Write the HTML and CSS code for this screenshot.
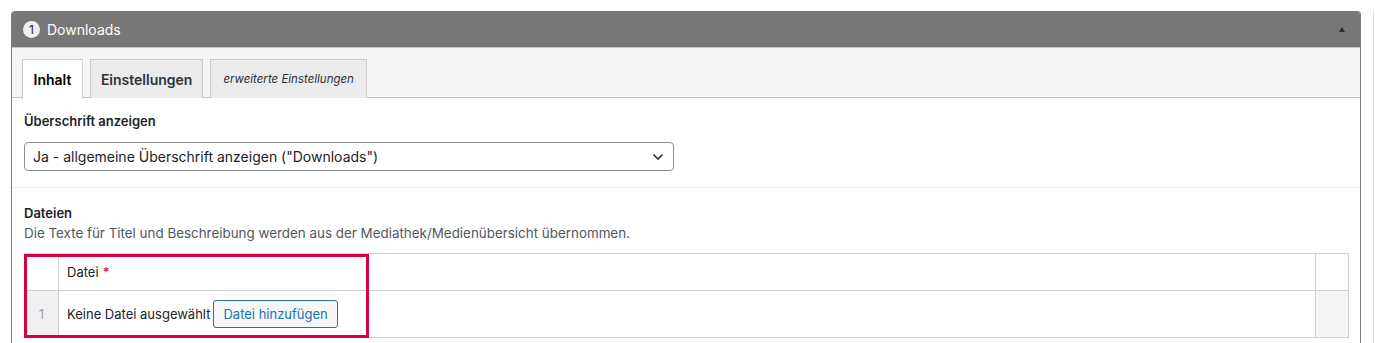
FILE: index.html
```html
<!DOCTYPE html>
<html lang="de">
<head>
<meta charset="utf-8">
<link rel="stylesheet" href="styles.css">
</head>
<body>
<div class="page">
  <div class="panel">
    <div class="panel-head">
      <span class="num">1</span>
      <span class="title">Downloads</span>
      <span class="toggle"></span>
    </div>
    <div class="tabs">
      <div class="tab active">Inhalt</div>
      <div class="tab">Einstellungen</div>
      <div class="tab small">erweiterte Einstellungen</div>
    </div>
    <div class="section first">
      <div class="label">Überschrift anzeigen</div>
      <div class="select">
        <span>Ja - allgemeine Überschrift anzeigen ("Downloads")</span>
        <svg class="chev" width="12" height="8" viewBox="0 0 12 8"><path d="M1.5 1.5 L6 6 L10.5 1.5" fill="none" stroke="#2c3338" stroke-width="1.6"/></svg>
      </div>
    </div>
    <div class="section second">
      <div class="label">Dateien</div>
      <div class="desc">Die Texte für Titel und Beschreibung werden aus der Mediathek/Medienübersicht übernommen.</div>
      <div class="table-wrap">
        <div class="table">
          <div class="row head">
            <div class="cell idx"></div>
            <div class="cell main">Datei <span class="req">*</span></div>
            <div class="cell end"></div>
          </div>
          <div class="row body">
            <div class="cell idx">1</div>
            <div class="cell main">Keine Datei ausgewählt <button class="btn">Datei hinzufügen</button></div>
            <div class="cell end"></div>
          </div>
        </div>
        <div class="highlight"></div>
      </div>
    </div>
  </div>
  <div class="edge"></div>
</div>
</body>
</html>
```
FILE: styles.css
```css
html, body { margin: 0; padding: 0; background: #fff; }
body {
  font-family: Inter, "Liberation Sans", Arial, sans-serif;
  font-size: 13px;
  color: #1d2327;
  height: 343px;
  overflow: hidden;
}
.page {
  display: flex;
  padding: 11px 0 0 11px;
  gap: 12px;
  height: 343px;
  box-sizing: border-box;
}
.panel {
  width: 1350px;
  border: 1px solid #7a7a7a;
  border-bottom: none;
  border-radius: 4px 4px 0 0;
  box-sizing: border-box;
  flex: none;
  overflow: hidden;
}
.edge { width: 1px; background: #dcdcde; }
.panel-head {
  height: 35px;
  background: #777;
  display: flex;
  align-items: center;
  padding: 0 0 0 11px;
  color: #fff;
  font-size: 14px;
  border-bottom: 1px solid #c3c4c7;
}
.num {
  width: 17px; height: 17px;
  border-radius: 50%;
  background: #f0f0f0;
  color: #1d2327;
  font-size: 12px;
  display: flex; align-items: center; justify-content: center;
  margin-right: 7px;
}
.title { flex: 1; }
.toggle {
  width: 0; height: 0;
  border-left: 3.5px solid transparent;
  border-right: 3.5px solid transparent;
  border-bottom: 5px solid #2c2c2c;
  margin-right: 15px;
}
.tabs {
  background: #f5f5f5;
  display: flex;
  gap: 6px;
  padding: 11px 0 0 10px;
  border-bottom: 1px solid #c3c4c7;
  height: 38px;
}
.tab {
  border: 1px solid #ccc;
  border-bottom: none;
  background: #ebebeb;
  padding: 0 10px;
  font-size: 14px;
  font-weight: 600;
  color: #2c3338;
  display: flex; align-items: center;
  height: 38px;
}
.tab.active { background: #fff; color: #000; height: 39px; padding: 0 10.5px; }
.tab + .tab { margin-left: 1px; }
.tab.small { font-size: 11.5px; font-weight: normal; font-style: italic; padding: 0 12px; color: #2c3338; }
.section { padding: 0 11px 0 12px; }
.section.first { padding-top: 13px; padding-bottom: 16px; border-bottom: 1px solid #ececec; }
.section.second { padding-top: 15px; }
.label { font-weight: 600; line-height: 20px; color: #1d2327; }
.first .label { margin-bottom: 11px; }
.select {
  width: 650px;
  height: 29px;
  box-sizing: border-box;
  border: 1px solid #8c8f94;
  border-radius: 4px;
  display: flex;
  align-items: center;
  justify-content: space-between;
  padding: 0 8px 0 8px;
  font-size: 14px;
  color: #1d2327;
}
.chev { margin-right: 1px; }
.desc { line-height: 20px; color: #50575e; font-size: 13.4px; }
.table-wrap { position: relative; margin-top: 10px; }
.table {
  border: 1px solid #ccd0d4;
}
.row { display: flex; }
.row.head { height: 36px; border-bottom: 1px solid #ccd0d4; }
.row.body { height: 46px; }
.cell { display: flex; align-items: center; }
.cell.idx { width: 33px; border-right: 1px solid #ccd0d4; justify-content: center; color: #a0a5aa; }
.row.body .cell.idx { background: #f0f0f0; }
.cell.main { flex: 1; padding-left: 8px; color: #1d2327; }
.cell.end { width: 32px; border-left: 1px solid #ccd0d4; }
.row.body .cell.end { background: #f5f5f5; }
.req { color: #d63638; margin-left: 4px; font-weight: bold; }
.btn {
  margin-left: 3px;
  height: 28px;
  padding: 0 9px;
  border: 1px solid #2271b1;
  border-radius: 3px;
  background: #f6f7f7;
  color: #2271b1;
  font-family: inherit;
  font-size: 13px;
}
.highlight {
  position: absolute;
  left: 0; top: 1px;
  width: 345px; height: 84px;
  border: 3px solid #d8003c;
  box-sizing: border-box;
  pointer-events: none;
}
```
